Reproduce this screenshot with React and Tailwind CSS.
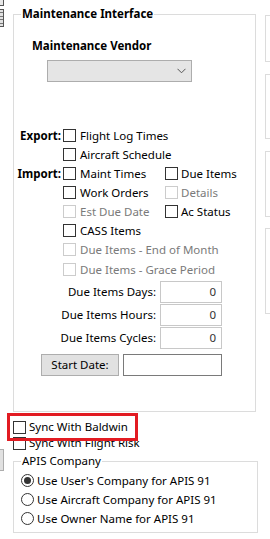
import React from "react";

function Check({ label, disabled, gap = "ml-[4px]" }) {
  return (
    <div className="flex items-center">
      <div
        className={
          "w-[13px] h-[13px] shrink-0 border bg-white " +
          (disabled ? "border-[#cccccc]" : "border-[#333333]")
        }
      />
      <span className={gap + " whitespace-nowrap " + (disabled ? "text-[#7a7a7a]" : "text-black")}>
        {label}
      </span>
    </div>
  );
}

function Radio({ label, checked }) {
  return (
    <div className="flex items-center h-[19px] ml-[7px]">
      <div className="w-[13px] h-[13px] shrink-0 rounded-full border border-[#333333] bg-white flex items-center justify-center">
        {checked && <div className="w-[7px] h-[7px] rounded-full bg-[#333333]" />}
      </div>
      <span className="ml-[3px] whitespace-nowrap">{label}</span>
    </div>
  );
}

function Row({ label, children }) {
  return (
    <div className="flex items-center h-[19px]">
      <div className="w-[49px] pr-[2px] text-right font-bold whitespace-nowrap">{label}</div>
      {children}
    </div>
  );
}

function NumRow({ label }) {
  return (
    <div className="flex items-center h-[22px] mt-[1px]">
      <div className="w-[142px] text-right whitespace-nowrap">{label}</div>
      <div className="ml-[4px] w-[62px] h-[22px] border border-[#c8c8c8] bg-white flex items-center justify-end pr-[5px] text-[#333333]">
        0
      </div>
    </div>
  );
}

export default function App() {
  return (
    <div
      className="relative w-[270px] h-[539px] bg-white overflow-hidden flex text-[11.5px] leading-[16px] text-black"
      style={{ fontFamily: '"Noto Sans", "Liberation Sans", sans-serif' }}
    >
      {/* left slivers */}
      <div className="w-[13px] shrink-0 flex flex-col">
        <div className="w-[4px] h-[6px] border-r border-b border-[#555555] bg-[#e8e8e8]" />
        <div className="w-[4px] h-[18px] mt-[3px] border-r border-t border-b border-[#555555] bg-[#e1e1e1] flex flex-col justify-evenly">
          <div className="h-[1px] bg-[#777777]" />
          <div className="h-[1px] bg-[#777777]" />
          <div className="h-[1px] bg-[#777777]" />
          <div className="h-[1px] bg-[#777777]" />
        </div>
        <div className="w-[4px] h-[22px] mt-[422px] border-r border-t border-b border-[#adadad] bg-[#e1e1e1]" />
      </div>

      {/* main column */}
      <div className="w-[252px] shrink-0 flex flex-col">
        <div className="mt-[14px] h-[398px] w-[243px] border border-[#dcdcdc] flex flex-col">
          <div className="-mt-[9px] ml-[7px] px-[1px] self-start bg-white font-bold h-[16px]">
            Maintenance Interface
          </div>
          <div className="mt-[16px] ml-[18px] font-bold h-[16px]">Maintenance Vendor</div>
          <div className="mt-[6px] ml-[33px] w-[145px] h-[22px] border border-[#adadad] bg-[#e5e5e5] flex items-center justify-end pr-[5px]">
            <svg width="9" height="6" viewBox="0 0 9 6">
              <path d="M0.5 0.8 L4.5 4.8 L8.5 0.8" fill="none" stroke="#555555" strokeWidth="1" />
            </svg>
          </div>

          <div className="mt-[44px] flex flex-col">
            <Row label="Export:">
              <Check label="Flight Log Times" />
            </Row>
            <Row label="">
              <Check label="Aircraft Schedule" />
            </Row>
            <Row label="Import:">
              <div className="w-[102px]">
                <Check label="Maint Times" />
              </div>
              <Check label="Due Items" gap="ml-[3px]" />
            </Row>
            <Row label="">
              <div className="w-[102px]">
                <Check label="Work Orders" />
              </div>
              <Check label="Details" disabled gap="ml-[3px]" />
            </Row>
            <Row label="">
              <div className="w-[102px]">
                <Check label="Est Due Date" disabled />
              </div>
              <Check label="Ac Status" gap="ml-[3px]" />
            </Row>
            <Row label="">
              <Check label="CASS Items" />
            </Row>
            <Row label="">
              <Check label="Due Items - End of Month" disabled />
            </Row>
            <div className="mt-[1px]">
              <Row label="">
                <Check label="Due Items - Grace Period" disabled />
              </Row>
            </div>
          </div>

          <div className="mt-[1px] flex flex-col">
            <NumRow label="Due Items Days:" />
            <NumRow label="Due Items Hours:" />
            <NumRow label="Due Items Cycles:" />
          </div>

          <div className="mt-[5px] flex items-center h-[22px]">
            <div className="ml-[27px] w-[78px] h-[22px] border border-[#adadad] bg-[#e1e1e1] flex items-center justify-center">
              Start Date:
            </div>
            <div className="ml-[4px] w-[99px] h-[22px] border border-[#7a7a7a] bg-white" />
          </div>
        </div>

        <div className="mt-[7px] h-[16px] flex items-center">
          <Check label="Sync With Baldwin" gap="ml-[3px]" />
        </div>
        <div className="h-[16px] flex items-center">
          <Check label="Sync With Flight Risk" gap="ml-[3px]" />
        </div>

        <div className="mt-[10px] h-[72px] w-[245px] border border-[#dcdcdc] flex flex-col">
          <div className="-mt-[9px] ml-[7px] px-[1px] self-start bg-white h-[16px]">APIS Company</div>
          <div className="mt-[2px] flex flex-col">
            <Radio label="Use User's Company for APIS 91" checked />
            <Radio label="Use Aircraft Company for APIS 91" />
            <Radio label="Use Owner Name for APIS 91" />
          </div>
        </div>
      </div>

      {/* right column */}
      <div className="w-[10px] shrink-0 flex flex-col">
        <div className="mt-[15px] h-[47px] border-l border-t border-b border-[#dcdcdc]" />
        <div className="mt-[12px] h-[65px] border-l border-t border-b border-[#dcdcdc]" />
        <div className="mt-[12px] h-[66px] border-l border-t border-b border-[#dcdcdc]" />
        <div className="mt-[11px] h-[86px] border-l border-t border-b border-[#dcdcdc]" />
      </div>

      {/* highlight annotation */}
      <div className="absolute left-[7px] top-[413px] w-[131px] h-[28px] border-[3px] border-[#e21b22]" />
    </div>
  );
}
